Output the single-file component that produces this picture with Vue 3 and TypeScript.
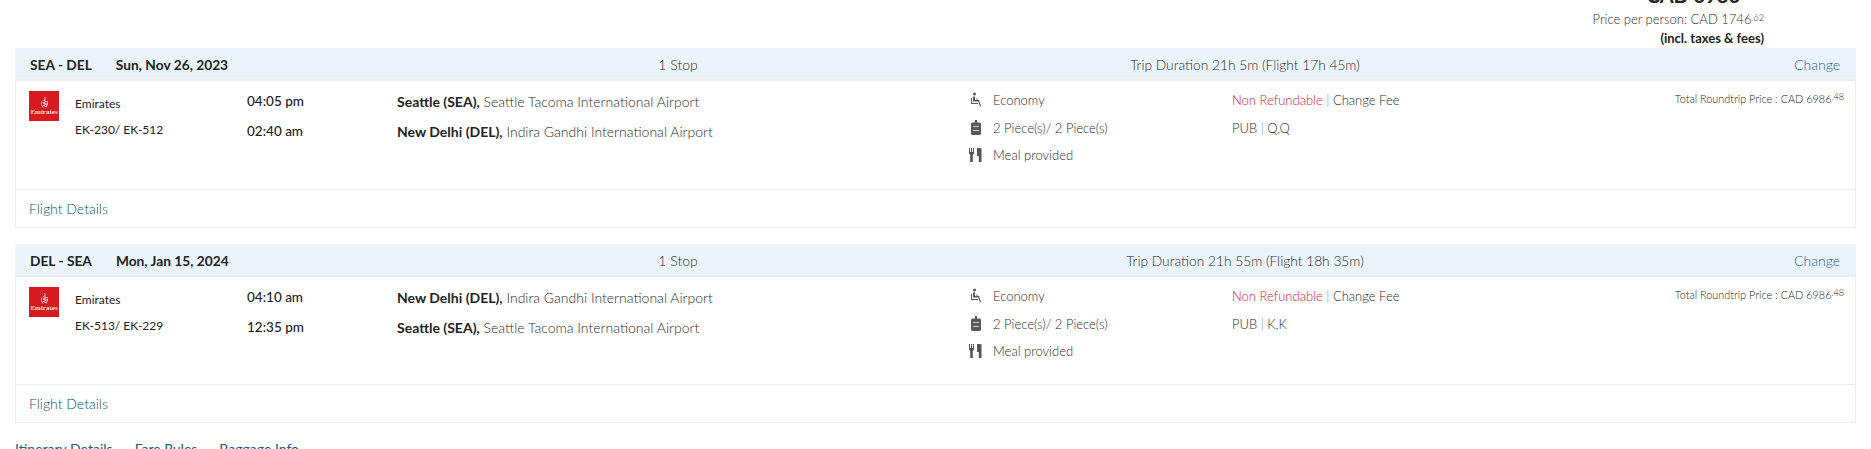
<script setup lang="ts">
interface Leg {
  route: string
  date: string
  stops: string
  duration: string
  flights: string
  depTime: string
  arrTime: string
  depCity: string
  depAirport: string
  arrCity: string
  arrAirport: string
  codes: string
}
const legs: Leg[] = [
  {
    route: 'SEA - DEL', date: 'Sun, Nov 26, 2023', stops: '1 Stop',
    duration: 'Trip Duration 21h 5m (Flight 17h 45m)', flights: 'EK-230/ EK-512',
    depTime: '04:05 pm', arrTime: '02:40 am',
    depCity: 'Seattle (SEA),', depAirport: 'Seattle Tacoma International Airport',
    arrCity: 'New Delhi (DEL),', arrAirport: 'Indira Gandhi International Airport',
    codes: 'Q,Q',
  },
  {
    route: 'DEL - SEA', date: 'Mon, Jan 15, 2024', stops: '1 Stop',
    duration: 'Trip Duration 21h 55m (Flight 18h 35m)', flights: 'EK-513/ EK-229',
    depTime: '04:10 am', arrTime: '12:35 pm',
    depCity: 'New Delhi (DEL),', depAirport: 'Indira Gandhi International Airport',
    arrCity: 'Seattle (SEA),', arrAirport: 'Seattle Tacoma International Airport',
    codes: 'K,K',
  },
]
</script>

<template>
  <div class="page">
    <div class="summary">
      <div class="total">CAD 6986</div>
      <div class="per">Price per person: CAD 1746<sup>.62</sup></div>
      <div class="incl">(incl. taxes &amp; fees)</div>
    </div>

    <section v-for="leg in legs" :key="leg.route" class="leg">
      <header class="head">
        <div class="head-left"><b>{{ leg.route }}</b><b>{{ leg.date }}</b></div>
        <div class="head-stop">{{ leg.stops }}</div>
        <div class="head-dur">{{ leg.duration }}</div>
        <a class="head-change">Change</a>
      </header>
      <div class="body">
        <div class="logo">
          <svg width="30" height="30" viewBox="0 0 30 30">
            <rect width="30" height="30" fill="#d71921" />
            <path d="M15.500 6l1 2-2 1.500 3 1-3.500 1.500 3.500 1-3 1.500 3 1.500M13 10.500c-1 2 -.5 4 1 6M18 10c1 2 .5 4-1 6" fill="none" stroke="#f4d3d5" stroke-width="1" />
            <text x="15" y="23" text-anchor="middle" class="logo-text">Emirates</text>
          </svg>
        </div>
        <div class="airline">
          <div>Emirates</div>
          <div>{{ leg.flights }}</div>
        </div>
        <div class="times">
          <div>{{ leg.depTime }}</div>
          <div>{{ leg.arrTime }}</div>
        </div>
        <div class="places">
          <div><b>{{ leg.depCity }}</b> {{ leg.depAirport }}</div>
          <div><b>{{ leg.arrCity }}</b> {{ leg.arrAirport }}</div>
        </div>
        <div class="facts">
          <div class="fact">
            <svg width="14" height="16" viewBox="0 0 14 16"><path d="M4 2a1.500 1.500 0 1 1 3 0 1.500 1.500 0 0 1-3 0zM4 4.500h2V8h1.500V6.500h1V8h1.500l2 6-1 .5-1.800-5H4zM2 6h1v5h6v1H2z" fill="#5a5a5a" /></svg>
            <span>Economy</span>
          </div>
          <div class="fact">
            <svg width="14" height="16" viewBox="0 0 14 16"><path d="M6 0h2v2.500h2.500c.8 0 1.500.7 1.500 1.500v9.500c0 .8-.7 1.500-1.500 1.500h-7c-.8 0-1.500-.7-1.500-1.500V4c0-.8.700-1.500 1.500-1.500H6z" fill="#5a5a5a" /><rect x="4" y="6" width="6" height="1" fill="#ccc" /><rect x="4" y="10" width="6" height="1" fill="#ccc" /></svg>
            <span>2 Piece(s)/ 2 Piece(s)</span>
          </div>
          <div class="fact meal">
            <svg width="14" height="16" viewBox="0 0 14 16"><path d="M0 1h1v4h1V1h1v4h1V1h1v5.500L3.800 8v7H1.200V8L0 6.500zM8 1c2.200 0 4 .5 4.500 0v14h-2.700V9H8z" fill="#555" /></svg>
            <span>Meal provided</span>
          </div>
        </div>
        <div class="fare">
          <div><span class="red">Non Refundable</span><i>|</i>Change Fee</div>
          <div>PUB<i>|</i>{{ leg.codes }}</div>
        </div>
        <div class="price">Total Roundtrip Price : CAD 6986<sup>.48</sup></div>
      </div>
      <footer class="foot"><a>Flight Details</a></footer>
    </section>

    <nav class="tabs">
      <a>Itinerary Details</a>
      <a>Fare Rules</a>
      <a>Baggage Info</a>
    </nav>
  </div>
</template>

<style>
html, body { margin: 0; background: #fff; overflow: hidden; }
</style>

<style scoped>
.page {
  height: 449px;
  overflow: hidden;
  padding: 0 15px;
  font-family: Lato, sans-serif;
  font-size: 13px;
  color: #2d2d2d;
  box-sizing: border-box;
}
b { font-weight: 700; }
.summary {
  height: 48px;
  padding-right: 92px;
  text-align: right;
  position: relative;
}
.total {
  position: absolute;
  right: 116px;
  top: -17px;
  font-size: 20px;
  font-weight: 700;
  color: #222;
}
.per { padding-top: 11px; line-height: 17px; font-size: 13px; font-weight: 300; }
.per sup, .price sup { font-size: 9px; line-height: 0; vertical-align: 3px; }
.incl { font-weight: 700; font-size: 13px; line-height: 20px; color: #222; }
.leg { margin-bottom: 16px; }
.head {
  height: 30px;
  padding-top: 1px;
  background: #ebf4fb;
  border-bottom: 2px solid #ededed;
  display: grid;
  grid-template-columns: 500px 326px 808px 1fr;
  align-items: center;
  font-size: 14px;
  font-weight: 300;
}
.head-left { display: flex; gap: 24px; padding-left: 15px; color: #222; font-size: 13.750px; }
.head-left b { font-weight: 700; }
.head-stop { text-align: center; }
.head-dur { text-align: center; font-size: 13.750px; }
.head-change { text-align: right; padding-right: 16px; color: #1f5fa8; }
.body {
  height: 108px;
  border-left: 1px solid #ededed;
  border-right: 1px solid #ededed;
  border-bottom: 1px solid #ededed;
  display: flex;
  position: relative;
}
.leg + .leg .body { height: 107px; }
.logo { width: 30px; margin: 10px 0 0 13px; height: 30px; }
.logo svg { display: block; }
.logo-text { font-family: "Liberation Serif", serif; font-size: 7px; font-weight: 700; fill: #f6dcdd; }
.airline { width: 172px; margin-left: 16px; padding-top: 15px; font-size: 12px; font-weight: 400; color: #222; }
.airline div { height: 26px; line-height: 16px; }
.times { width: 150px; padding-top: 11px; font-size: 13.500px; font-weight: 500; color: #222; }
.times div, .places div { height: 30px; line-height: 19px; }
.places { width: 572px; padding-top: 11px; font-size: 14px; font-weight: 300; }
.places b { color: #222; }
.facts { width: 263px; padding-top: 10px; }
.fact { display: flex; gap: 10px; height: 27.500px; align-items: flex-start; font-weight: 300; line-height: 18px; }
.fact svg { flex: none; margin-top: 1px; }
.fare { width: 400px; padding-top: 10px; font-weight: 300; }
.fare div { height: 27.500px; line-height: 18px; }
.fare i { font-style: normal; margin: 0 3.500px; color: #6a8fb5; }
.red { color: #e1202f; }
.price { position: absolute; right: 11px; top: 10px; font-size: 10.850px; font-weight: 300; line-height: 16px; color: #222; }
.foot {
  height: 37px;
  border: 1px solid #ededed;
  border-top: 0;
  display: flex;
  align-items: center;
  padding-left: 13px;
  font-weight: 300;
  font-size: 14px;
  color: #0a5078;
}
.tabs { display: flex; gap: 22px; margin-top: 1px; font-weight: 400; font-size: 14px; color: #1a5a80; line-height: 20px; }
</style>
